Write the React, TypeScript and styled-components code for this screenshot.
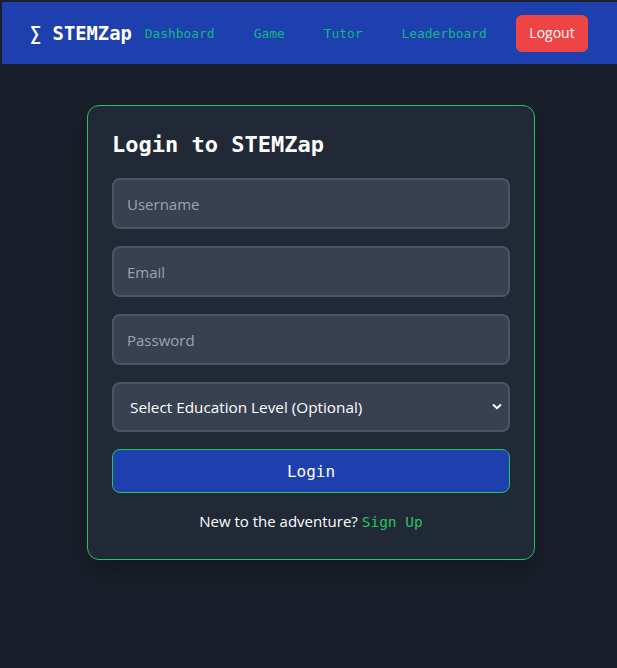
import React from 'react';
import styled, { createGlobalStyle } from 'styled-components';

const GlobalStyle = createGlobalStyle`
  html, body {
    margin: 0;
    padding: 0;
    background: #1a1f2b;
  }
  * {
    box-sizing: border-box;
  }
`;

const Page = styled.div`
  min-height: 668px;
  background: #1a1f2b;
  padding: 2px 0 0 2px;
  font-family: 'Open Sans', 'Noto Sans', sans-serif;
`;

const Header = styled.header`
  height: 62px;
  background: #1e40af;
  display: flex;
  align-items: center;
  padding: 0 29px 0 28px;
`;

const Logo = styled.div`
  font-family: 'DejaVu Sans Mono', monospace;
  font-weight: 700;
  font-size: 18.8px;
  color: #ffffff;
  margin-right: 13px;
  white-space: nowrap;
`;

const Nav = styled.nav`
  display: flex;
  align-items: center;
  gap: 39px;
  flex: 1;
`;

const NavLink = styled.a`
  font-family: 'DejaVu Sans Mono', monospace;
  font-size: 12.9px;
  color: #10b981;
  text-decoration: none;
  white-space: nowrap;
`;

const LogoutButton = styled.button`
  width: 72px;
  height: 37px;
  border: none;
  border-radius: 6px;
  background: #ef4444;
  color: #ffffff;
  font-family: 'Open Sans', 'Noto Sans', sans-serif;
  font-size: 14px;
  line-height: 1;
  cursor: pointer;
`;

const Main = styled.main`
  display: flex;
  justify-content: center;
  padding-top: 41px;
`;

const Card = styled.div`
  width: 448px;
  margin-left: 3px;
  background: #212937;
  border: 1px solid #22c55e;
  border-radius: 12px;
  padding: 24px 24px 26px;
  box-shadow: 0 10px 25px rgba(0, 0, 0, 0.3);
`;

const Title = styled.h1`
  margin: 0 0 18px;
  font-family: 'DejaVu Sans Mono', monospace;
  font-weight: 700;
  font-size: 22px;
  line-height: 30px;
  color: #ffffff;
`;

const Form = styled.form`
  display: flex;
  flex-direction: column;
  gap: 17px;
`;

const Input = styled.input`
  width: 100%;
  height: 51px;
  padding: 0 13px;
  background: #374151;
  border: 2px solid #4b5563;
  border-radius: 8px;
  color: #ffffff;
  font-family: 'Open Sans', 'Noto Sans', sans-serif;
  font-size: 15px;
  outline: none;

  &::placeholder {
    color: #9ca3af;
  }
`;

const SelectWrap = styled.div`
  position: relative;
`;

const Select = styled.select`
  width: 100%;
  height: 50px;
  padding: 0 16px;
  background: #374151;
  border: 2px solid #4b5563;
  border-radius: 8px;
  color: #ffffff;
  font-family: 'Open Sans', 'Noto Sans', sans-serif;
  font-size: 15.3px;
  appearance: none;
  outline: none;
`;

const Chevron = styled.svg`
  position: absolute;
  right: 8px;
  top: 21px;
  pointer-events: none;
`;

const LoginButton = styled.button`
  height: 44px;
  background: #1e40af;
  border: 1px solid #22c55e;
  border-radius: 8px;
  color: #ffffff;
  font-family: 'DejaVu Sans Mono', monospace;
  font-size: 16px;
  cursor: pointer;
`;

const Footer = styled.p`
  margin: 17px 0 0;
  text-align: center;
  color: #ffffff;
  font-size: 15px;
  line-height: 22px;
`;

const SignUp = styled.a`
  font-family: 'DejaVu Sans Mono', monospace;
  font-size: 14.5px;
  color: #22c55e;
  text-decoration: none;
`;

export default function App() {
  return (
    <>
      <GlobalStyle />
      <Page>
        <Header>
          <Logo>∑ STEMZap</Logo>
          <Nav>
            <NavLink href="#">Dashboard</NavLink>
            <NavLink href="#">Game</NavLink>
            <NavLink href="#">Tutor</NavLink>
            <NavLink href="#">Leaderboard</NavLink>
          </Nav>
          <LogoutButton>Logout</LogoutButton>
        </Header>
        <Main>
          <Card>
            <Title>Login to STEMZap</Title>
            <Form onSubmit={(e) => e.preventDefault()}>
              <Input placeholder="Username" />
              <Input placeholder="Email" type="email" />
              <Input placeholder="Password" type="password" />
              <SelectWrap>
                <Select defaultValue="">
                  <option value="">Select Education Level (Optional)</option>
                  <option value="middle">Middle School</option>
                  <option value="high">High School</option>
                  <option value="college">College</option>
                </Select>
                <Chevron width="10" height="7" viewBox="0 0 10 7">
                  <path d="M1 1.5 L5 5.2 L9 1.5" stroke="#ffffff" strokeWidth="2" fill="none" />
                </Chevron>
              </SelectWrap>
              <LoginButton type="submit">Login</LoginButton>
            </Form>
            <Footer>
              New to the adventure? <SignUp href="#">Sign Up</SignUp>
            </Footer>
          </Card>
        </Main>
      </Page>
    </>
  );
}
